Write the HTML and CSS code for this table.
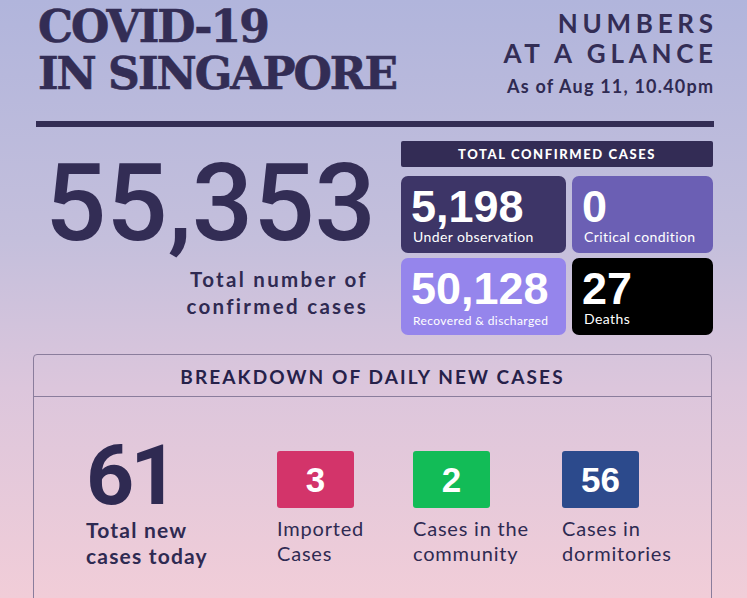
FILE: index.html
```html
<!DOCTYPE html>
<html>
<head>
<meta charset="utf-8">
<link rel="stylesheet" href="styles.css">
</head>
<body>
<div class="page">
  <header class="top">
    <h1 class="title">COVID-19<br>IN SINGAPORE</h1>
    <div class="glance">
      <div class="glance-head">NUMBERS<br>AT A GLANCE</div>
      <div class="asof">As of Aug 11, 10.40pm</div>
    </div>
  </header>
  <div class="rule"></div>
  <section class="totals">
    <div class="total-left">
      <div class="big">55,353</div>
      <div class="big-label">Total number of<br>confirmed cases</div>
    </div>
    <div class="panel">
      <div class="panel-head">TOTAL CONFIRMED CASES</div>
      <div class="cards">
        <div class="card c-obs"><div class="num">5,198</div><div class="lbl">Under observation</div></div>
        <div class="card c-crit"><div class="num">0</div><div class="lbl">Critical condition</div></div>
        <div class="card c-rec"><div class="num">50,128</div><div class="lbl small">Recovered &amp; discharged</div></div>
        <div class="card c-dead"><div class="num">27</div><div class="lbl">Deaths</div></div>
      </div>
    </div>
  </section>
  <section class="breakdown">
    <div class="bd-head">BREAKDOWN OF DAILY NEW CASES</div>
    <div class="bd-body">
      <div class="today">
        <div class="today-num">61</div>
        <div class="today-lbl">Total new<br>cases today</div>
      </div>
      <div class="item">
        <div class="chip pink">3</div>
        <div class="item-lbl">Imported<br>Cases</div>
      </div>
      <div class="item">
        <div class="chip green">2</div>
        <div class="item-lbl">Cases in the<br>community</div>
      </div>
      <div class="item">
        <div class="chip navy">56</div>
        <div class="item-lbl">Cases in<br>dormitories</div>
      </div>
    </div>
  </section>
</div>
</body>
</html>
```

FILE: styles.css
```css
html, body {
  margin: 0;
  padding: 0;
}
body {
  width: 747px;
  height: 598px;
  overflow: hidden;
  background: linear-gradient(to bottom, #b1b5dc 0%, #c4bfdc 40%, #dcc6dc 65%, #f1cdd8 100%);
  color: #2f2a52;
  font-family: "Lato", "Open Sans", sans-serif;
}
.page {
  padding: 3px 34px 0 36px;
}
.top {
  display: flex;
  justify-content: space-between;
  align-items: flex-start;
}
.title {
  margin: 0 0 0 2px;
  font-family: "DejaVu Serif", serif;
  font-weight: 700;
  font-size: 44px;
  line-height: 47px;
  color: #332d55;
  letter-spacing: -2px;
  -webkit-text-stroke: 0.6px #332d55;
}
.glance {
  text-align: right;
  padding-top: 5px;
}
.glance-head {
  font-weight: 700;
  font-size: 26px;
  line-height: 30px;
  letter-spacing: 4.7px;
  margin-right: -4.7px;
  color: #332d55;
}
.asof {
  font-weight: 700;
  font-size: 18px;
  line-height: 20px;
  margin-top: 8px;
  letter-spacing: 1.2px;
  margin-right: -1.2px;
  color: #2f2a52;
}
.rule {
  height: 6px;
  background: #332d55;
  margin-top: 24px;
  margin-right: -1px;
}
.totals {
  display: flex;
  justify-content: space-between;
  margin-top: 14px;
}
.total-left {
  width: 335px;
  text-align: right;
}
.big {
  font-family: "Roboto", sans-serif;
  font-weight: 500;
  font-size: 108px;
  line-height: 110px;
  color: #332d55;
  letter-spacing: 0;
  margin-top: 7px;
  margin-right: -5px;
}
.big-label {
  font-weight: 700;
  font-size: 20.5px;
  line-height: 27px;
  letter-spacing: 2.3px;
  margin-right: 3px;
  margin-top: 8px;
}
.panel {
  width: 312px;
}
.panel-head {
  height: 26px;
  background: #332c55;
  color: #fff;
  border-radius: 2px;
  text-align: center;
  font-weight: 900;
  font-size: 13px;
  line-height: 27px;
  letter-spacing: 1.6px;
}
.cards {
  display: grid;
  grid-template-columns: 165px 141px;
  grid-template-rows: 77px 77px;
  gap: 5px 6px;
  margin-top: 9px;
}
.card {
  border-radius: 7px;
  color: #fff;
  padding: 10px 10px 0 10px;
}
.num {
  font-family: "Liberation Sans", Arial, sans-serif;
  font-weight: 700;
  font-size: 45px;
  line-height: 42px;
}
.lbl {
  font-size: 14px;
  line-height: 16px;
  letter-spacing: 0.4px;
  margin-top: 1px;
  padding-left: 2px;
}
.lbl.small {
  font-size: 12px;
  padding-top: 2px;
}
.c-obs { background: #3d3567; }
.c-crit { background: #6b5fb4; }
.c-rec { background: #9585ec; }
.c-dead { background: #000; }
.breakdown {
  margin: 19px 1px 0 -3px;
  border: 1px solid #8a7d9c;
  border-radius: 4px;
  height: 260px;
}
.bd-head {
  height: 41px;
  border-bottom: 1px solid #8a7d9c;
  text-align: center;
  font-weight: 700;
  font-size: 19px;
  line-height: 44px;
  letter-spacing: 2.1px;
  color: #26214a;
}
.bd-body {
  display: grid;
  grid-template-columns: 191px 136px 149px auto;
  padding: 37px 0 0 52px;
}
.today-num {
  font-family: "Roboto", sans-serif;
  font-weight: 700;
  font-size: 84px;
  line-height: 84px;
  letter-spacing: -4px;
  color: #2f2a52;
}
.today-lbl {
  font-weight: 700;
  font-size: 21px;
  line-height: 26px;
  letter-spacing: 1.2px;
  margin-top: -1px;
}
.item {
  padding-top: 17px;
}
.chip {
  width: 77px;
  height: 57px;
  border-radius: 3px;
  color: #fff;
  font-family: "Liberation Sans", Arial, sans-serif;
  font-weight: 700;
  font-size: 35px;
  line-height: 57px;
  text-align: center;
}
.pink { background: #d3346a; }
.green { background: #12bc57; }
.navy { background: #2c4a8c; }
.item-lbl {
  font-size: 20px;
  line-height: 25px;
  letter-spacing: 0.8px;
  margin-top: 8px;
  color: #2f2a52;
}
```
